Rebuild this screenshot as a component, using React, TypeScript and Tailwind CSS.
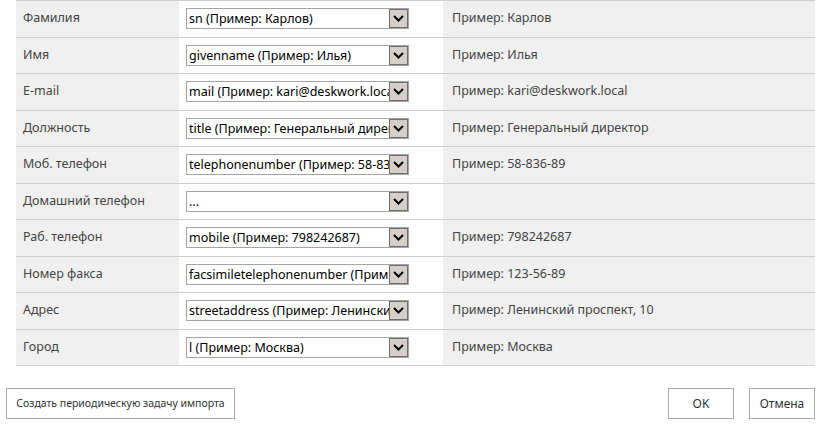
import React from "react";

const rows: [string, string, string][] = [
  ["Фамилия", "sn (Пример: Карлов)", "Пример: Карлов"],
  ["Имя", "givenname (Пример: Илья)", "Пример: Илья"],
  ["E-mail", "mail (Пример: kari@deskwork.local)", "Пример: kari@deskwork.local"],
  ["Должность", "title (Пример: Генеральный директор)", "Пример: Генеральный директор"],
  ["Моб. телефон", "telephonenumber (Пример: 58-836-89)", "Пример: 58-836-89"],
  ["Домашний телефон", "...", ""],
  ["Раб. телефон", "mobile (Пример: 798242687)", "Пример: 798242687"],
  ["Номер факса", "facsimiletelephonenumber (Пример: 123-56-89)", "Пример: 123-56-89"],
  ["Адрес", "streetaddress (Пример: Ленинский проспект, 10)", "Пример: Ленинский проспект, 10"],
  ["Город", "l (Пример: Москва)", "Пример: Москва"],
];

function Select({ value }: { value: string }) {
  return (
    <div className="flex h-[21px] w-[223px] overflow-hidden border border-[#a5a5a5] bg-white">
      <div className="min-w-0 flex-1 overflow-hidden whitespace-nowrap pl-[2px] text-[12.5px] leading-[19px] text-black">
        {value}
      </div>
      <div className="flex h-[19px] w-[19px] shrink-0 items-center justify-center border border-[#6e6e6e] bg-[#d4d0c8]">
        <svg width="11" height="7" viewBox="0 0 11 7">
          <path d="M1 1 L5.5 5.5 L10 1" stroke="#000" strokeWidth="2" fill="none" />
        </svg>
      </div>
    </div>
  );
}

export default function App() {
  return (
    <div
      className="relative h-[428px] w-[817px] overflow-hidden bg-white text-[12.5px] text-[#444]"
      style={{ fontFamily: '"Noto Sans", "Open Sans", sans-serif' }}
    >
      <div className="ml-[16px] w-[799px] border-t border-[#cfcfcf]">
        {rows.map(([label, sel, ex], i) => (
          <div key={i} className="flex h-[36.5px] border-b border-[#cfcfcf]">
            <div className="flex w-[163px] items-center bg-[#f0f0f0] pl-[7px]">{label}</div>
            <div className="flex w-[264px] items-center bg-white pl-[7px]">
              <Select value={sel} />
            </div>
            <div className="flex flex-1 items-center bg-[#f0f0f0] pl-[9px]">{ex}</div>
          </div>
        ))}
      </div>
      <div className="mt-[22px] flex items-center px-[6px]">
        <button className="h-[31px] w-[229px] whitespace-nowrap border border-[#ababab] bg-white text-[10.5px] text-[#333]">
          Создать периодическую задачу импорта
        </button>
        <div className="flex-1" />
        <button className="mr-[15px] h-[31px] w-[66px] border border-[#ababab] bg-white text-[12px] text-[#333]">
          OK
        </button>
        <button className="mr-[-4px] h-[31px] w-[66px] border border-[#ababab] bg-white text-[12px] text-[#333]">
          Отмена
        </button>
      </div>
    </div>
  );
}
